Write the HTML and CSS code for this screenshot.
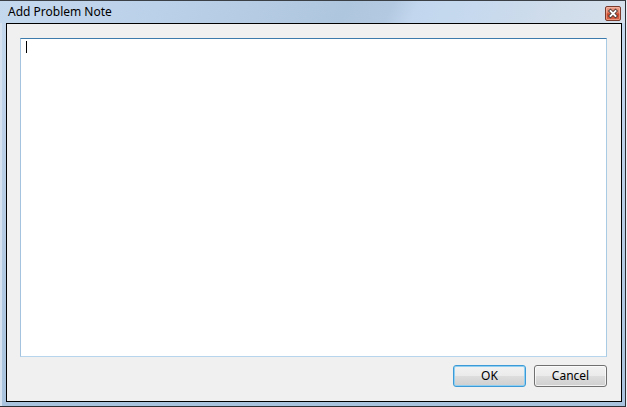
FILE: index.html
```
<!DOCTYPE html>
<html>
<head>
<meta charset="utf-8">
<link rel="stylesheet" href="styles.css">
</head>
<body>
<div class="window">
  <div class="titlebar">
    <span class="title">Add Problem Note</span>
    <span class="close">
      <svg width="14" height="13" viewBox="0 0 14 13">
        <path d="M4.5 4 L9.5 9 M9.5 4 L4.5 9" stroke="#4a3a36" stroke-width="3.6" stroke-linecap="square"/>
        <path d="M4.5 4 L9.5 9 M9.5 4 L4.5 9" stroke="#ffffff" stroke-width="1.8" stroke-linecap="square"/>
      </svg>
    </span>
  </div>
  <div class="client">
    <div class="editor"><span class="caret"></span></div>
    <div class="buttons">
      <button class="btn btn-default">OK</button>
      <button class="btn">Cancel</button>
    </div>
  </div>
</div>
</body>
</html>
```
FILE: styles.css
```
html, body {
  margin: 0;
  padding: 0;
}
body {
  width: 627px;
  height: 407px;
  background: #e9eef4;
  font-family: "Noto Sans", "Open Sans", sans-serif;
  overflow: hidden;
}
.window {
  width: 625px;
  height: 405px;
  border-top: 1px solid #3b4046;
  border-right: 1px solid #2c2f33;
  border-bottom: 1px solid #2c2f33;
  background: linear-gradient(180deg, #c6d9ee 0%, #b4cbe3 60%, #a9c3de 100%);
  display: flex;
  flex-direction: column;
  box-shadow: inset 2px 0 0 #d6e2ef;
}
.titlebar {
  height: 22px;
  display: flex;
  align-items: center;
  padding: 0 4px 0 8px;
  background: linear-gradient(115deg, #c5d9ee 0%, #bbd1e9 25%, #afc6df 55%, #b3c9e1 62%, #c2d7ee 66%, #c6d9ee 75%, #cfdcea 88%, #d6e1ec 100%);
}
.title {
  flex: 1;
  font-size: 12px;
  color: #000;
  line-height: 22px;
  margin-top: -1px;
}
.close {
  width: 14px;
  height: 13px;
  margin-top: 3px;
  border: 1px solid #7a3a2c;
  border-radius: 2px;
  background: linear-gradient(180deg, #eba28f 0%, #e07e64 40%, #c9472b 55%, #d86448 100%);
  box-shadow: inset 0 0 0 1px rgba(255, 200, 180, 0.5);
  display: flex;
  align-items: center;
  justify-content: center;
}
.close svg {
  display: block;
}
.client {
  flex: 1;
  margin: 0 3px 4px 6px;
  border: 1px solid #000;
  background: #f0f0f0;
  display: flex;
  flex-direction: column;
  padding: 14px 14px 14px 13px;
}
.editor {
  flex: 1;
  background: #fff;
  border: 1px solid #a9cbe4;
  border-top-color: #3d7bad;
  border-left-color: #a4c3de;
  border-bottom-color: #b7d5ec;
  position: relative;
}
.caret {
  position: absolute;
  left: 5px;
  top: 2px;
  width: 1px;
  height: 12px;
  background: #000;
}
.buttons {
  display: flex;
  justify-content: flex-end;
  gap: 8px;
  margin-top: 8px;
}
.btn {
  width: 73px;
  height: 22px;
  padding: 0;
  font-family: "Noto Sans", "Open Sans", sans-serif;
  font-size: 12px;
  color: #000;
  border: 1px solid #707070;
  border-radius: 3px;
  background: linear-gradient(180deg, #f2f2f2 0%, #ebebeb 48%, #dddddd 52%, #cfcfcf 100%);
  box-shadow: inset 0 0 0 1px rgba(255, 255, 255, 0.7);
  line-height: 18px;
}
.btn-default {
  border-color: #3c9ad6;
  box-shadow: inset 0 0 0 1px #8fd0f2;
}
```
